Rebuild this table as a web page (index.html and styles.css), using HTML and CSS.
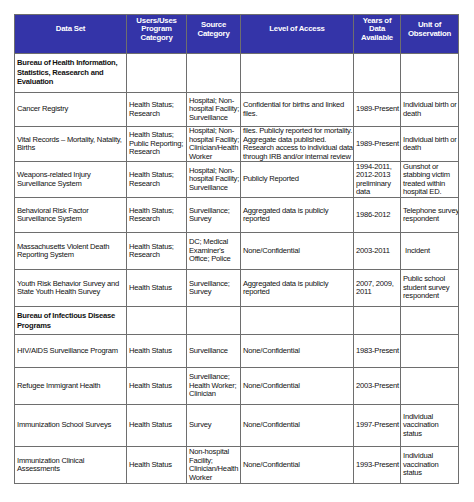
FILE: index.html
```html
<!DOCTYPE html>
<html>
<head>
<meta charset="utf-8">
<link rel="stylesheet" href="styles.css">
</head>
<body>
<div class="page">
<table class="grid">
  <colgroup>
    <col class="c1"><col class="c2"><col class="c3"><col class="c4"><col class="c5"><col class="c6">
  </colgroup>
  <thead>
    <tr class="h-head">
      <th>Data Set</th>
      <th>Users/Uses<br>Program<br>Category</th>
      <th>Source<br>Category</th>
      <th>Level of Access</th>
      <th>Years of<br>Data<br>Available</th>
      <th>Unit of<br>Observation</th>
    </tr>
  </thead>
  <tbody>
    <tr class="h-bureau1 section">
      <td class="b">Bureau of Health Information,<br>Statistics, Reasearch and<br>Evaluation</td>
      <td></td><td></td><td></td><td></td><td></td>
    </tr>
    <tr class="h-r34">
      <td>Cancer Registry</td>
      <td>Health Status;<br>Research</td>
      <td>Hospital; Non-<br>hospital Facility;<br>Surveillance</td>
      <td>Confidential for births and linked<br>files.</td>
      <td>1989-Present</td>
      <td>Individual birth or<br>death</td>
    </tr>
    <tr class="h-r35">
      <td>Vital Records – Mortality, Natality,<br>Births</td>
      <td>Health Status;<br>Public Reporting;<br>Research</td>
      <td>Hospital; Non-<br>hospital Facility;<br>Clinician/Health<br>Worker</td>
      <td>files. Publicly reported for mortality.<br>Aggregate data published.<br>Research access to individual data<br>through IRB and/or internal review</td>
      <td>1989-Present</td>
      <td>Individual birth or<br>death</td>
    </tr>
    <tr class="h-r36">
      <td>Weapons-related Injury<br>Surveillance System</td>
      <td>Health Status;<br>Research</td>
      <td>Hospital; Non-<br>hospital Facility;<br>Surveillance</td>
      <td>Publicly Reported</td>
      <td>1994-2011,<br>2012-2013<br>preliminary<br>data</td>
      <td>Gunshot or<br>stabbing victim<br>treated within<br>hospital ED.</td>
    </tr>
    <tr class="h-r35">
      <td>Behavioral Risk Factor<br>Surveillance System</td>
      <td>Health Status;<br>Research</td>
      <td>Surveillance;<br>Survey</td>
      <td>Aggregated data is publicly<br>reported</td>
      <td>1986-2012</td>
      <td>Telephone survey<br>respondent</td>
    </tr>
    <tr class="h-r37">
      <td>Massachusetts Violent Death<br>Reporting System</td>
      <td>Health Status;<br>Research</td>
      <td>DC; Medical<br>Examiner's<br>Office; Police</td>
      <td>None/Confidential</td>
      <td>2003-2011</td>
      <td class="indent">Incident</td>
    </tr>
    <tr class="h-r37">
      <td>Youth Risk Behavior Survey and<br>State Youth Health Survey</td>
      <td>Health Status</td>
      <td>Surveillance;<br>Survey</td>
      <td>Aggregated data is publicly<br>reported</td>
      <td>2007, 2009,<br>2011</td>
      <td>Public school<br>student survey<br>respondent</td>
    </tr>
    <tr class="h-r28 section">
      <td class="b">Bureau of Infectious Disease<br>Programs</td>
      <td></td><td></td><td></td><td></td><td></td>
    </tr>
    <tr class="h-r33">
      <td>HIV/AIDS Surveillance Program</td>
      <td>Health Status</td>
      <td>Surveillance</td>
      <td>None/Confidential</td>
      <td>1983-Present</td>
      <td></td>
    </tr>
    <tr class="h-r37">
      <td>Refugee Immigrant Health</td>
      <td>Health Status</td>
      <td>Surveillance;<br>Health Worker;<br>Clinician</td>
      <td>None/Confidential</td>
      <td>2003-Present</td>
      <td></td>
    </tr>
    <tr class="h-r42">
      <td>Immunization School Surveys</td>
      <td>Health Status</td>
      <td>Survey</td>
      <td>None/Confidential</td>
      <td>1997-Present</td>
      <td>Individual<br>vaccination<br>status</td>
    </tr>
    <tr class="h-r37">
      <td>Immunization Clinical<br>Assessments</td>
      <td>Health Status</td>
      <td>Non-hospital<br>Facility;<br>Clinician/Health<br>Worker</td>
      <td>None/Confidential</td>
      <td>1993-Present</td>
      <td>Individual<br>vaccination<br>status</td>
    </tr>
  </tbody>
</table>
</div>
</body>
</html>
```

FILE: styles.css
```css
html, body {
  margin: 0;
  padding: 0;
  background: #ffffff;
}
.page {
  padding: 14px 0 0 14px;
}
.grid {
  border-collapse: collapse;
  table-layout: fixed;
  width: 444px;
  font-family: "Liberation Sans", Arial, sans-serif;
  font-size: 7.6px;
  letter-spacing: -0.22px;
  line-height: 8.5px;
  color: #111111;
}
.c1 { width: 112px; }
.c2 { width: 60px; }
.c3 { width: 54px; }
.c4 { width: 113px; }
.c5 { width: 47px; }
.c6 { width: 58px; }
.grid th, .grid td {
  border: 1px solid #6e6e6e;
  padding: 0 2px;
  vertical-align: middle;
  text-align: left;
  white-space: nowrap;
  overflow: hidden;
}
.grid th {
  background: #3434a8;
  color: #ffffff;
  font-weight: bold;
  font-size: 7.8px;
  text-align: center;
  line-height: 8.5px;
  padding-bottom: 9px;
}
.h-head { height: 39px; }
.h-bureau1 { height: 39px; }
.h-r28 { height: 28px; }
.h-r33 { height: 33px; }
.h-r34 { height: 34px; }
.h-r35 { height: 35px; }
.h-r36 { height: 36px; }
.h-r37 { height: 37px; }
.h-r42 { height: 42px; }
.section td {
  vertical-align: top;
  padding-top: 4px;
}
.grid td.b {
  font-weight: bold;
  line-height: 9.5px;
}
.grid td.indent {
  padding-left: 4px;
}
```
